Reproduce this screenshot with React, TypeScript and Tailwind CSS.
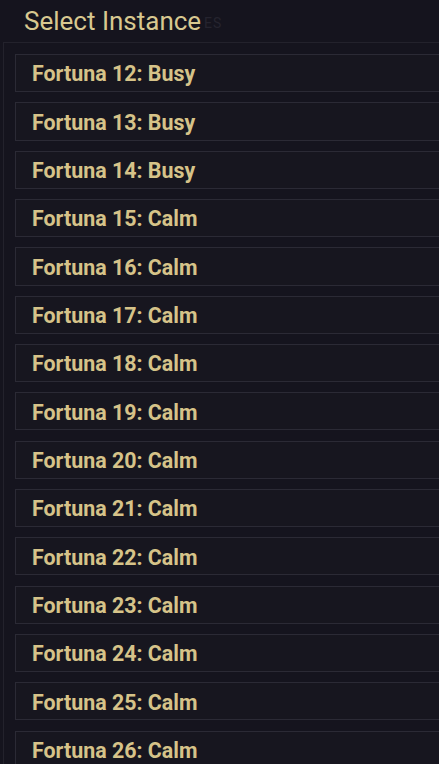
import React from "react";

const rows = [
  "Fortuna 12: Busy",
  "Fortuna 13: Busy",
  "Fortuna 14: Busy",
  "Fortuna 15: Calm",
  "Fortuna 16: Calm",
  "Fortuna 17: Calm",
  "Fortuna 18: Calm",
  "Fortuna 19: Calm",
  "Fortuna 20: Calm",
  "Fortuna 21: Calm",
  "Fortuna 22: Calm",
  "Fortuna 23: Calm",
  "Fortuna 24: Calm",
  "Fortuna 25: Calm",
  "Fortuna 26: Calm",
];

export default function App() {
  return (
    <div
      className="w-[439px] h-[764px] overflow-hidden bg-[#15141e] relative"
      style={{ fontFamily: "Roboto, 'Liberation Sans', sans-serif" }}
    >
      <div className="h-[42px] flex items-center pl-[24px] relative">
        <span className="text-[26px] text-[#d8c890] leading-none">Select Instance</span>
        <span className="absolute left-[204px] top-[13px] text-[14px] tracking-[1px] text-[#25242f]">ES</span>
      </div>
      <div className="ml-[3px] w-[480px] border-l border-t border-[#23222c] pl-[11px] pt-[11px] flex flex-col gap-[10.15px]">
        {rows.map((r) => (
          <div
            key={r}
            className="h-[38.2px] shrink-0 border border-[#2b2a35] bg-[#17161f] flex items-center pl-[16px] pt-[2px]"
          >
            <span className="text-[21.4px] font-bold text-[#d6c389] leading-none">{r}</span>
          </div>
        ))}
      </div>
    </div>
  );
}
